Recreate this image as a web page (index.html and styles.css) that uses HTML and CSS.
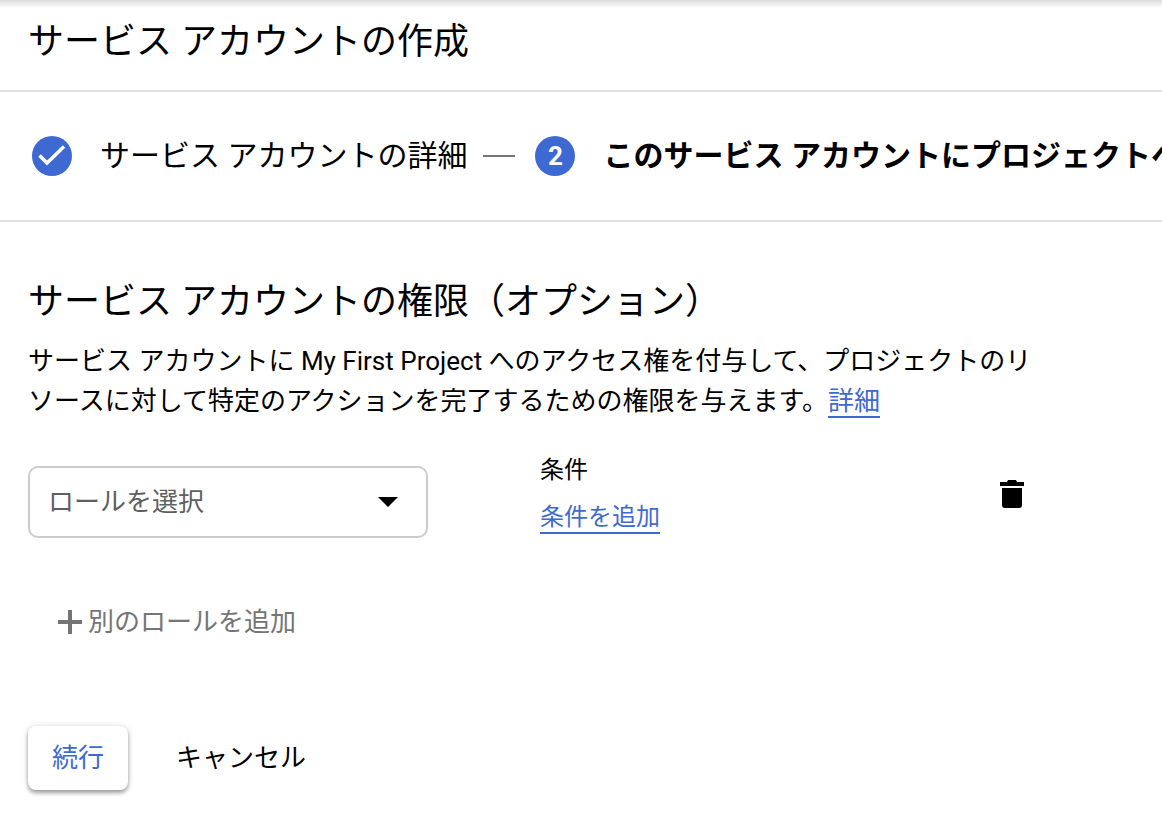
FILE: index.html
```html
<!DOCTYPE html>
<html lang="ja">
<head>
    <meta charset="UTF-8">
    <meta name="viewport" content="width=device-width, initial-scale=1.0">
    <title>サービス アカウントの作成</title>
    <link rel="stylesheet" href="styles.css">
</head>
<body>

<header class="page-header">
    <h1>サービス アカウントの作成</h1>
</header>

<ol class="stepper">
    <li class="step">
        <span class="step-badge">
            <svg width="40" height="40" viewBox="0 0 40 40" aria-hidden="true">
                <path d="M7.5 19.5L15 27L32 10.5" fill="none" stroke="#fff" stroke-width="3.5"/>
            </svg>
        </span>
        <span>サービス アカウントの詳細</span>
    </li>
    <li class="step-line" role="presentation"></li>
    <li class="step active" aria-current="step">
        <span class="step-badge">2</span>
        <span>このサービス アカウントにプロジェクトへの</span>
    </li>
</ol>

<main class="content">
    <h2>サービス アカウントの権限（オプション）</h2>
    <p class="description">サービス アカウントに My First Project へのアクセス権を付与して、プロジェクトのリソースに対して特定のアクションを完了するための権限を与えます。<a class="link" href="#">詳細</a></p>

    <form>
        <div class="role-row">
            <div class="select-box">
                <select class="role-select" aria-label="ロールを選択">
                    <option>ロールを選択</option>
                </select>
                <svg class="arrow" width="20" height="10" viewBox="0 0 20 10" aria-hidden="true">
                    <path d="M0 0h20L10 10z"/>
                </svg>
            </div>
            <div class="condition">
                <span>条件</span>
                <a class="link" href="#">条件を追加</a>
            </div>
            <button type="button" class="delete" aria-label="削除">
                <svg width="24" height="28" viewBox="0 0 24 28" aria-hidden="true">
                    <path d="M0 2h7l1-2h8l1 2h7v4H0zM2 8h20v17a3 3 0 0 1-3 3H5a3 3 0 0 1-3-3z"/>
                </svg>
            </button>
        </div>

        <button type="button" class="add-role">
            <svg width="24" height="24" viewBox="0 0 24 24" aria-hidden="true">
                <path d="M10 0h4v10h10v4H14v10h-4V14H0v-4h10z" fill="#757575"/>
            </svg>
            別のロールを追加
        </button>

        <div class="actions">
            <button type="submit" class="btn btn-continue">続行</button>
            <button type="button" class="btn">キャンセル</button>
        </div>
    </form>
</main>

</body>
</html>
```

FILE: styles.css
```css
* {
    box-sizing: border-box;
}
body {
    margin: 0;
    font-family: Roboto, "Noto Sans CJK JP", sans-serif;
    font-size: 26px;
    line-height: 40px;
    color: #000;
    background-color: #fff;
    overflow-x: hidden;
}
h1, h2 {
    margin: 0;
    font-size: 36px;
    font-weight: 400;
    line-height: 48px;
}
button, select {
    font: inherit;
    color: inherit;
    background: none;
    border: none;
    padding: 0;
    cursor: pointer;
}
svg {
    display: block;
}
.page-header {
    padding: 18px 28px 24px;
    border-bottom: 2px solid #e0e0e0;
    background: linear-gradient(#dcdcdc, #fff 8px);
}
.stepper {
    display: flex;
    align-items: center;
    margin: 0;
    padding: 44px 0 44px 32px;
    list-style: none;
    font-size: 30px;
    white-space: nowrap;
    border-bottom: 2px solid #e0e0e0;
    overflow: hidden;
}
.step {
    display: flex;
    flex-shrink: 0;
    align-items: center;
    gap: 28px;
}
.step-badge {
    width: 40px;
    height: 40px;
    border-radius: 50%;
    background-color: #3f69d2;
    color: #fff;
    font-size: 26px;
    text-align: center;
}
.step-line {
    flex-shrink: 0;
    width: 32px;
    height: 2px;
    margin: 0 20px 0 16px;
    background-color: #757575;
}
.active {
    font-weight: 700;
}
.content {
    max-width: 1062px;
    padding: 56px 28px 40px;
}
.description {
    margin: 15px 0 33px;
}
.link {
    color: #3f69d2;
    text-decoration: none;
    border-bottom: 2px solid #3f69d2;
}
.role-row {
    display: flex;
    align-items: flex-start;
    padding-right: 10px;
}
.select-box {
    display: grid;
    align-items: center;
    width: 400px;
    margin: 12px 112px 0 0;
}
.role-select {
    grid-area: 1 / 1;
    height: 72px;
    padding: 0 60px 0 18px;
    border: 2px solid #ccc;
    border-radius: 10px;
    color: #5f5f5f;
    appearance: none;
}
.arrow {
    grid-area: 1 / 1;
    justify-self: end;
    margin-right: 30px;
    pointer-events: none;
}
.condition {
    display: flex;
    flex-direction: column;
    align-items: flex-start;
    gap: 16px;
    font-size: 24px;
    line-height: 32px;
}
.condition .link {
    line-height: 30px;
}
.delete {
    margin: 26px 0 0 auto;
}
.add-role {
    display: flex;
    align-items: center;
    gap: 6px;
    margin: 64px 0 84px 30px;
    color: #757575;
}
.actions {
    display: flex;
    gap: 24px;
}
.btn {
    height: 64px;
    padding: 0 24px;
    border-radius: 8px;
}
.btn-continue {
    color: #3f69d2;
    background-color: #fff;
    box-shadow: 0 3px 4px rgba(0, 0, 0, 0.35), 0 0 6px rgba(0, 0, 0, 0.12);
}
```
